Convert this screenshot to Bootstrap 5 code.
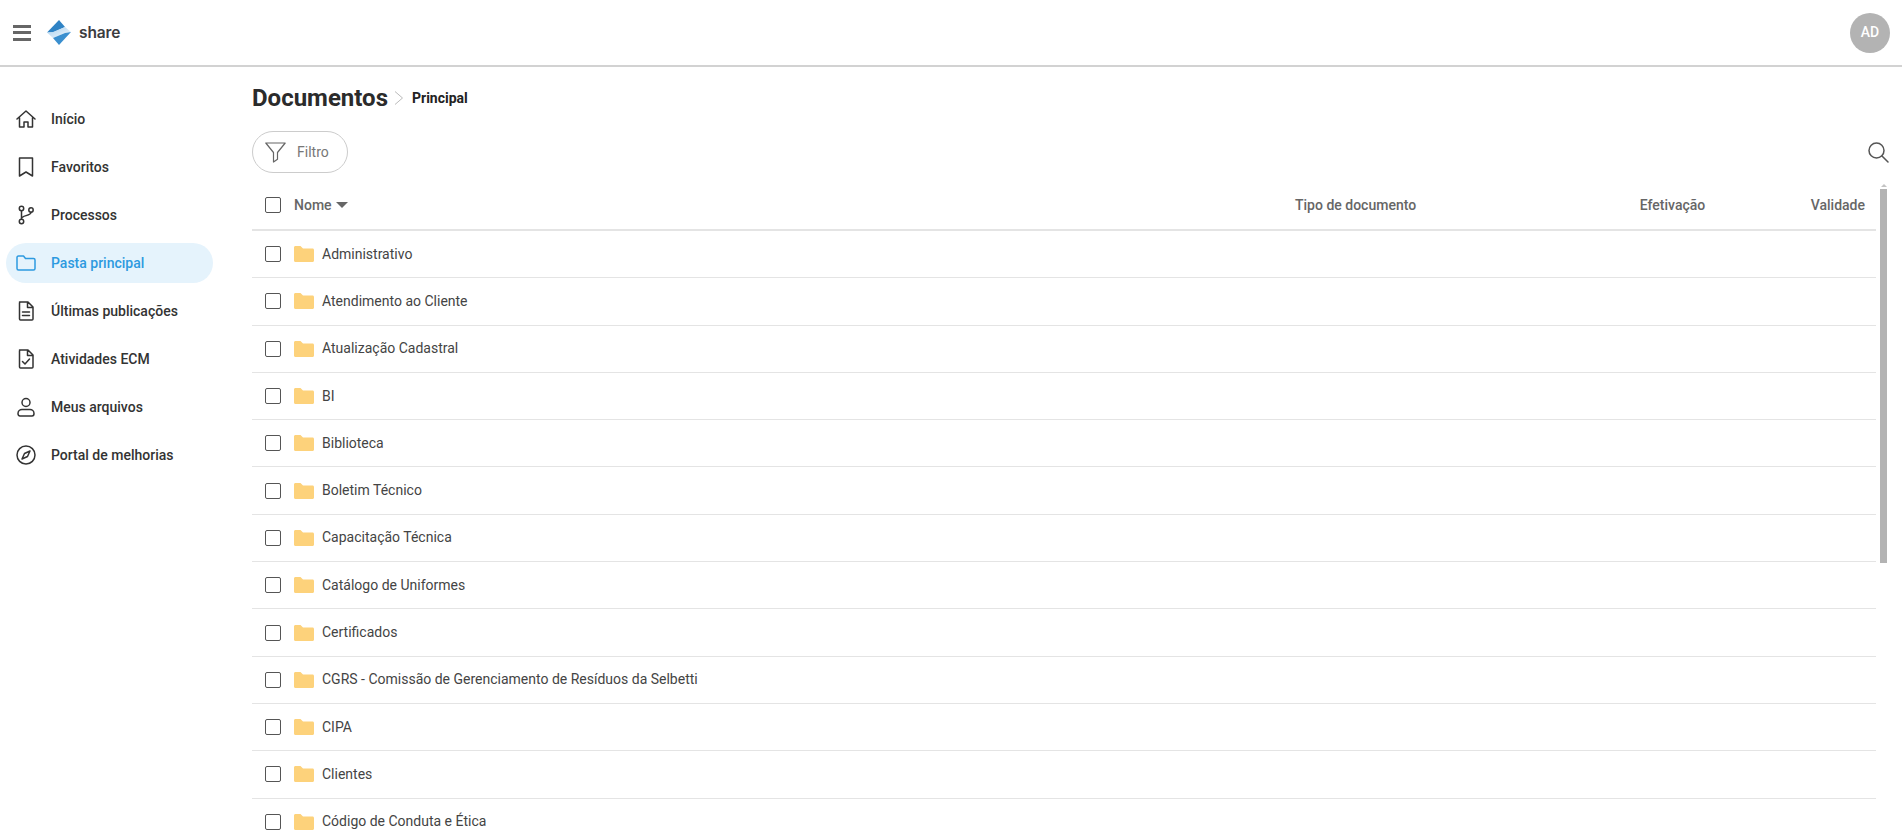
<!DOCTYPE html>
<html lang="pt-BR">
<head>
  <meta charset="UTF-8">
  <title>share - Documentos</title>
  <meta name="viewport" content="width=device-width, initial-scale=1">
  <link href="https://cdn.jsdelivr.net/npm/bootstrap@5.3.3/dist/css/bootstrap.min.css" rel="stylesheet">
  <style>
    body {
      font-family: Roboto, "Liberation Sans", sans-serif;
      font-size: 14px;
      color: #333;
      height: 837px;
      overflow: hidden;
    }
    .top-bar {
      height: 67px;
      padding: 0 12px 0 13px;
      border-bottom: 2px solid #d2d2d2;
    }
    .menu-btn { width: 18px; height: 16px; margin-right: 16px; }
    .menu-btn span { display: block; height: 3px; background: #666; margin-bottom: 3.5px; }
    .brand-name {
      font-family: Inter, sans-serif;
      font-weight: 600;
      font-size: 15.5px;
      color: #3c3c3f;
      margin-left: 8px;
      letter-spacing: -.1px;
    }
    .avatar {
      width: 40px;
      height: 40px;
      background: #b3b3b3;
      color: #fff;
      font-weight: 500;
      font-size: 14px;
      margin-right: 0;
    }
    .side-col { width: 252px; padding: 32px 0 0 6px; }
    .side-link {
      width: 207px;
      height: 40px;
      padding: 0 0 0 10px;
      margin-bottom: 8px;
      color: #333;
      font-weight: 500;
      font-size: 14px;
      border-radius: 20px;
    }
    .side-link svg { width: 20px; height: 20px; margin-right: 15px; fill: none; stroke: #333; stroke-width: 1.5; stroke-linecap: round; stroke-linejoin: round; }
    .side-link.is-current { background: #e5f3fc; color: #2d9ae0; }
    .side-link.is-current svg { stroke: #2d9ae0; }
    .main-col { min-width: 0; }
    .doc-title { font-size: 24px; font-weight: 700; color: #2b2b2b; line-height: 28px; margin: 0; }
    .crumb { font-size: 14px; font-weight: 700; color: #222; margin-left: 8px; }
    .title-row { height: 30px; margin-top: 16px; }
    .title-row svg { margin-left: 6px; }
    .tool-row { height: 42px; margin-top: 18px; padding-right: 13px; }
    .filter-btn {
      width: 96px;
      height: 42px;
      padding: 0 0 0 12px;
      border: 1px solid #ccc;
      color: #777;
      font-size: 14px;
      background: #fff;
    }
    .filter-btn svg { margin-right: 11px; }
    .doc-check.form-check-input {
      width: 16px;
      height: 16px;
      margin: 0 13px 0 13px;
      border: 1.5px solid #555;
      border-radius: 2px;
      flex: none;
    }
    .doc-line { height: 47.3px; border-bottom: 1px solid #e4e4e4; color: #444; }
    .doc-head { height: 50px; border-bottom: 2px solid #e4e4e4; color: #666; font-weight: 500; }
    .folder-ic { margin-right: 8px; flex: none; }
    .sort-caret { display: inline-block; margin-left: 4px; border-left: 6px solid transparent; border-right: 6px solid transparent; border-top: 6px solid #666; }
    .cell-name { width: 1043px; }
    .cell-type { width: 316px; }
    .cell-date { width: 123px; text-align: center; }
    .cell-valid { width: 90px; padding-right: 11px; text-align: right; }
    .rail { width: 11px; margin-left: 2px; margin-right: 13px; }
    .rail-arrow { width: 0; margin: 3px auto 2px; border-left: 3px solid transparent; border-right: 3px solid transparent; border-bottom: 3px solid #c4c4c4; }
    .rail-thumb { width: 7px; height: 374px; background: #b3b3b3; margin: 0 auto; }
    .scroll-wrap { margin-top: 8px; }
  </style>
</head>
<body>

<nav class="top-bar d-flex align-items-center justify-content-between">
  <div class="d-flex align-items-center">
    <div class="menu-btn"><span></span><span></span><span class="mb-0"></span></div>
    <svg width="24" height="25" viewBox="0 0 24 25">
      <defs>
        <linearGradient id="logoBand" x1="0" y1="0" x2="1" y2="1">
          <stop offset="0" stop-color="#a9d0ee"/>
          <stop offset="1" stop-color="#f2f8fd"/>
        </linearGradient>
      </defs>
      <path d="M12 0 18 7 6 12.500 0 12.500Z" fill="#2f83c5"/>
      <path d="M0 12.500 6 12 18 7 24 12 18 13 6 18Z" fill="url(#logoBand)"/>
      <path d="M24 12 18 13 6 18 12 25Z" fill="#3a8fcf"/>
    </svg>
    <span class="brand-name">share</span>
  </div>
  <div class="avatar rounded-circle d-flex align-items-center justify-content-center">AD</div>
</nav>

<div class="d-flex">
  <div class="side-col flex-shrink-0">
    <nav class="nav flex-column">
      <a class="nav-link side-link d-flex align-items-center" href="#">
        <svg viewBox="0 0 20 20"><path d="M1 10 10 2l9 8M3.500 8.500V18H8v-5h4v5h4.500V8.500"/></svg>Início</a>
      <a class="nav-link side-link d-flex align-items-center" href="#">
        <svg viewBox="0 0 20 20"><path d="M3.500 1h13v18L10 15l-6.500 4Z"/></svg>Favoritos</a>
      <a class="nav-link side-link d-flex align-items-center" href="#">
        <svg viewBox="0 0 20 20"><circle cx="5.500" cy="3.500" r="2.200"/><circle cx="5.500" cy="16.500" r="2.200"/><circle cx="15" cy="5" r="2.200"/><path d="M5.500 5.700v8.600M15 7.200c0 4-9.500 2.800-9.500 6.500"/></svg>Processos</a>
      <a class="nav-link side-link is-current d-flex align-items-center" href="#">
        <svg viewBox="0 0 20 20"><path d="M1 15.500V4.500C1 3.700 1.500 3 2.500 3h5l2 2.500h8c1 0 1.500.7 1.500 1.500v8.500c0 .8-.5 1.500-1.500 1.500h-15C1.500 17 1 16.300 1 15.500Z"/></svg>Pasta principal</a>
      <a class="nav-link side-link d-flex align-items-center" href="#">
        <svg viewBox="0 0 20 20"><path d="M3.500 1h8.500l5 5v12a1 1 0 0 1-1 1H4.500a1 1 0 0 1-1-1V2a1 1 0 0 1 1-1ZM11.500 1v5.500H17M6.500 11h7M6.500 14.500h7"/></svg>Últimas publicações</a>
      <a class="nav-link side-link d-flex align-items-center" href="#">
        <svg viewBox="0 0 20 20"><path d="M3.500 1h8.500l5 5v12a1 1 0 0 1-1 1H4.500a1 1 0 0 1-1-1V2a1 1 0 0 1 1-1ZM11.500 1v5.500H17M6.500 12.500l2.500 2.500 4.500-5"/></svg>Atividades ECM</a>
      <a class="nav-link side-link d-flex align-items-center" href="#">
        <svg viewBox="0 0 20 20"><circle cx="10" cy="5.500" r="4"/><path d="M2 16.500c0-2.500 2-4 4-4h8c2 0 4 1.500 4 4 0 1.500-.7 2.500-2 2.500H4c-1.300 0-2-1-2-2.500Z"/></svg>Meus arquivos</a>
      <a class="nav-link side-link d-flex align-items-center" href="#">
        <svg viewBox="0 0 20 20"><circle cx="10" cy="10" r="9"/><path d="M14 6 8.500 8.500 6 14l5.500-2.500Z"/></svg>Portal de melhorias</a>
    </nav>
  </div>

  <div class="main-col flex-grow-1">
    <div class="title-row d-flex align-items-center">
      <h1 class="doc-title">Documentos</h1>
      <svg width="10" height="16" viewBox="0 0 10 16" fill="none" stroke="#bbb" stroke-width="1"><path d="M1 1.500 8.500 8 1 14.500"/></svg>
      <span class="crumb">Principal</span>
    </div>

    <div class="tool-row d-flex align-items-center justify-content-between">
      <button class="btn filter-btn rounded-pill d-flex align-items-center" type="button">
        <svg width="21" height="21" viewBox="0 0 21 21" fill="none" stroke="#666" stroke-width="1.200" stroke-linejoin="round"><path d="M.8 1h19.400l-7.700 9.500v6.800L8.500 20v-9.500Z"/></svg>Filtro</button>
      <svg width="21" height="21" viewBox="0 0 21 21" fill="none" stroke="#555" stroke-width="1.500" stroke-linecap="round"><circle cx="8.500" cy="8.500" r="7.500"/><path d="m14 14 6 6"/></svg>
    </div>

    <div class="scroll-wrap d-flex">
      <div class="flex-grow-1">
        <div class="doc-head d-flex align-items-center">
          <div class="cell-name d-flex align-items-center">
            <input class="form-check-input doc-check" type="checkbox">Nome<span class="sort-caret"></span>
          </div>
          <div class="cell-type">Tipo de documento</div>
          <div class="cell-date">Efetivação</div>
          <div class="cell-valid ms-auto">Validade</div>
        </div>
        <div id="docList"></div>
      </div>
      <div class="rail flex-shrink-0">
        <div class="rail-arrow"></div>
        <div class="rail-thumb"></div>
      </div>
    </div>
  </div>
</div>

<script src="https://cdn.jsdelivr.net/npm/bootstrap@5.3.3/dist/js/bootstrap.bundle.min.js"></script>
<script>
const folders = [
  "Administrativo", "Atendimento ao Cliente", "Atualização Cadastral", "BI", "Biblioteca",
  "Boletim Técnico", "Capacitação Técnica", "Catálogo de Uniformes", "Certificados",
  "CGRS - Comissão de Gerenciamento de Resíduos da Selbetti", "CIPA", "Clientes",
  "Código de Conduta e Ética"
];
document.getElementById('docList').innerHTML = folders.map(name => `
  <div class="doc-line d-flex align-items-center">
    <input class="form-check-input doc-check" type="checkbox">
    <svg class="folder-ic" width="20" height="16" viewBox="0 0 20 16"><path d="M0 1.500C0 .6.600 0 1.500 0h5l2.500 2.500h9.500c.9 0 1.500.6 1.500 1.500v10.500c0 .9-.6 1.500-1.500 1.500h-17C.6 16 0 15.400 0 14.500Z" fill="#fdd27b"/></svg>
    <span>${name}</span>
  </div>`).join('');
</script>
</body>
</html>
